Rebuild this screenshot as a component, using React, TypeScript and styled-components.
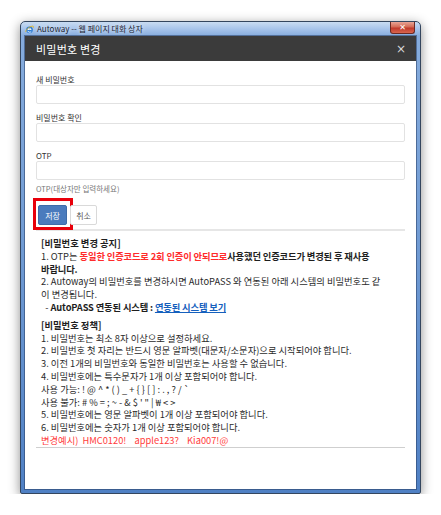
import * as React from "react";
import styled, { createGlobalStyle } from "styled-components";

const GlobalStyle = createGlobalStyle`
  html, body {
    margin: 0;
    padding: 0;
    background: #ffffff;
  }
  body {
    font-family: "Noto Sans CJK KR", "Noto Sans", sans-serif;
  }
`;

const Page = styled.div`
  padding: 21px 0 0 20px;
`;

const Window = styled.div`
  width: 401px;
  height: 473px;
  box-sizing: border-box;
  border: 1px solid #34465e;
  border-radius: 5px 5px 2px 2px;
  background: linear-gradient(
    180deg,
    #c9dcf2 0px,
    #a7c4ea 7px,
    #86acdd 14px,
    #6f9ad3 50%,
    #4f80c4 100%
  );
  box-shadow: 0 3px 12px rgba(0, 0, 0, 0.45);
  display: flex;
  flex-direction: column;
`;

const TitleBar = styled.div`
  height: 14px;
  display: flex;
  align-items: center;
  padding-left: 4px;
  gap: 3px;
  .caption {
    font-size: 8px;
    line-height: 10px;
    color: #1b2533;
    text-shadow: 0 0 4px rgba(255, 255, 255, 0.9);
    white-space: nowrap;
  }
`;

const CloseBox = styled.div`
  margin-left: auto;
  margin-right: 5px;
  align-self: flex-start;
  width: 25px;
  height: 12px;
  box-sizing: border-box;
  border: 1px solid #6b2a24;
  border-top: none;
  border-radius: 0 0 3px 3px;
  background: linear-gradient(180deg, #e8a596 0%, #d36a55 45%, #c0392b 55%, #d9664e 100%);
  display: flex;
  align-items: center;
  justify-content: center;
  color: #ffffff;
  font-family: "DejaVu Sans", sans-serif;
  font-weight: bold;
  font-size: 8px;
  line-height: 8px;
`;

const Client = styled.div`
  flex: 1;
  margin: 0 4px 4px;
  background: #ffffff;
  box-shadow: 0 0 0 1px rgba(40, 62, 100, 0.55);
  display: flex;
  flex-direction: column;
`;

const ModalHeader = styled.div`
  height: 25px;
  background: #3b3b3b;
  display: flex;
  align-items: center;
  justify-content: space-between;
  padding: 0 10px 0 11px;
  .title {
    color: #ffffff;
    font-size: 11px;
    letter-spacing: 0.2px;
  }
  .close {
    color: #d8d8d8;
    font-family: "DejaVu Sans", sans-serif;
    font-size: 12px;
    line-height: 12px;
  }
`;

const Body = styled.div`
  padding: 14px 11px 0;
  display: flex;
  flex-direction: column;
`;

const Field = styled.div`
  display: flex;
  flex-direction: column;
  margin-bottom: ${(p: { last?: boolean }) => (p.last ? "0" : "9px")};
`;

const Label = styled.label`
  font-size: 8px;
  line-height: 10px;
  color: #333333;
`;

const Input = styled.div`
  height: 19px;
  box-sizing: border-box;
  border: 1px solid #e2e2e2;
  border-radius: 2px;
  background: #ffffff;
`;

const Help = styled.div`
  margin-top: 4px;
  font-size: 7.5px;
  line-height: 10px;
  color: #777777;
`;

const ButtonRow = styled.div`
  margin-top: 11px;
  padding-left: 2px;
  display: flex;
  gap: 3px;
`;

const Button = styled.div<{ primary?: boolean; marked?: boolean }>`
  position: relative;
  height: 20px;
  width: ${(p) => (p.primary ? "29px" : "27px")};
  box-sizing: border-box;
  border-radius: 2px;
  display: flex;
  align-items: center;
  justify-content: center;
  font-size: 8px;
  background: ${(p) => (p.primary ? "#4a7bbd" : "#ffffff")};
  color: ${(p) => (p.primary ? "#ffffff" : "#555555")};
  border: 1px solid ${(p) => (p.primary ? "#3f6ca8" : "#d9d9d9")};
  ${(p) =>
    p.marked &&
    `
    &::after {
      content: "";
      position: absolute;
      top: -8px;
      left: -6px;
      right: -7px;
      bottom: -6px;
      border: 3px solid #e8000b;
    }
  `}
`;

const Divider = styled.div<{ thin?: boolean }>`
  margin-top: ${(p) => (p.thin ? "0" : "4px")};
  height: ${(p) => (p.thin ? "1px" : "2px")};
  background: ${(p) => (p.thin ? "#cfcfcf" : "#e6e6e6")};
`;

const Section = styled.div<{ first?: boolean }>`
  padding-left: 5px;
  margin-top: ${(p) => (p.first ? "6px" : "5px")};
  font-size: 9.3px;
  line-height: 12.8px;
  color: #2b2b2b;
`;

const Line = styled.div`
  white-space: nowrap;
  b {
    font-weight: bold;
    color: #1e1e1e;
    letter-spacing: -0.15px;
  }
  .red {
    color: #ff2b2b;
  }
  a {
    color: #1560bd;
    text-decoration: underline;
    font-weight: bold;
    letter-spacing: -0.15px;
  }
`;

const Title = styled(Line)`
  font-weight: bold;
  color: #1e1e1e;
`;

const Example = styled(Line)`
  color: #ff3b3b;
  word-spacing: 2px;
`;

const IeIcon = () => (
  <svg width="9" height="9" viewBox="0 0 16 16">
    <circle cx="8" cy="8.5" r="6" fill="#2f7fd6" />
    <path d="M4.5 9h7c0-2-1.4-3.5-3.4-3.5S4.5 7 4.5 9zm2-1.3c.2-.9.9-1.5 1.7-1.5s1.4.6 1.5 1.5z" fill="#fff" />
    <path d="M5 10.5c.4 1.4 1.6 2.3 3.2 2.3 1.2 0 2.2-.5 2.8-1.4" stroke="#fff" strokeWidth="1.6" fill="none" />
    <path d="M1.5 12.5C.5 9.5 6 3.5 13 2c2.5-.4 2.5 1.5 1 3.5" stroke="#f0b400" strokeWidth="1.4" fill="none" />
  </svg>
);

export default function App() {
  return (
    <Page>
      <GlobalStyle />
      <Window>
        <TitleBar>
          <IeIcon />
          <span className="caption">Autoway -- 웹 페이지 대화 상자</span>
          <CloseBox>✕</CloseBox>
        </TitleBar>
        <Client>
          <ModalHeader>
            <span className="title">비밀번호 변경</span>
            <span className="close">×</span>
          </ModalHeader>
          <Body>
            <Field>
              <Label>새 비밀번호</Label>
              <Input />
            </Field>
            <Field>
              <Label>비밀번호 확인</Label>
              <Input />
            </Field>
            <Field last>
              <Label>OTP</Label>
              <Input />
            </Field>
            <Help>OTP(대상자만 입력하세요)</Help>
            <ButtonRow>
              <Button primary marked>
                저장
              </Button>
              <Button>취소</Button>
            </ButtonRow>
            <Divider />
            <Section first>
              <Title>[비밀번호 변경 공지]</Title>
              <Line>
                1. OTP는 <b className="red">동일한 인증코드로 2회 인증이 안되므로</b>
                <b>사용했던 인증코드가 변경된 후 재사용</b>
              </Line>
              <Line>
                <b>바랍니다.</b>
              </Line>
              <Line>2. Autoway의 비밀번호를 변경하시면 AutoPASS 와 연동된 아래 시스템의 비밀번호도 같</Line>
              <Line>이 변경됩니다.</Line>
              <Line>
                &nbsp;&nbsp;- <b>AutoPASS 연동된 시스템 : </b>
                <a>연동된 시스템 보기</a>
              </Line>
            </Section>
            <Section>
              <Title>[비밀번호 정책]</Title>
              <Line>1. 비밀번호는 최소 8자 이상으로 설정하세요.</Line>
              <Line>2. 비밀번호 첫 자리는 반드시 영문 알파벳(대문자/소문자)으로 시작되어야 합니다.</Line>
              <Line>3. 이전 1개의 비밀번호와 동일한 비밀번호는 사용할 수 없습니다.</Line>
              <Line>4. 비밀번호에는 특수문자가 1개 이상 포함되어야 합니다.</Line>
              <Line>사용 가능: ! @ ^ * ( ) _ + {"{ }"} [ ] : . , ? / `</Line>
              <Line>사용 불가: # % = ; ~ - &amp; $ ' " | ₩ &lt; &gt;</Line>
              <Line>5. 비밀번호에는 영문 알파벳이 1개 이상 포함되어야 합니다.</Line>
              <Line>6. 비밀번호에는 숫자가 1개 이상 포함되어야 합니다.</Line>
              <Example>변경예시) HMC0120! &nbsp;apple123? &nbsp;Kia007!@</Example>
            </Section>
            <Divider thin />
          </Body>
        </Client>
      </Window>
    </Page>
  );
}
